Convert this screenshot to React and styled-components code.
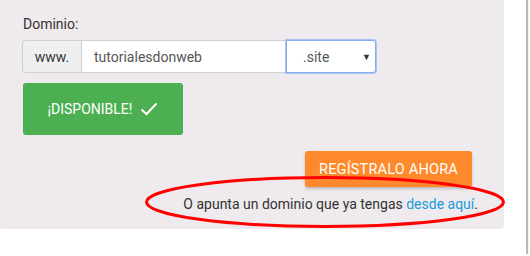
import React from 'react';
import styled, { createGlobalStyle } from 'styled-components';

const GlobalStyle = createGlobalStyle`
	body {
		margin: 0;
		background: #fff;
		font-family: Roboto, 'Liberation Sans', sans-serif;
	}
`;

const Card = styled.div`
	position: relative;
	width: 526px;
	height: 254px;
	background: #fff;
	box-shadow: 1px 1px 1px 1px rgba(0, 0, 0, 0.28);
`;

const Panel = styled.div`
	width: 504px;
	height: 229px;
	box-sizing: border-box;
	background: #eeeaee;
	border-radius: 0 0 4px 3px;
	padding: 15px 26px 0 22px;
	display: flex;
	flex-direction: column;
`;

const Label = styled.label`
	font-size: 14px;
	color: #333;
	margin-left: 1px;
	line-height: 19px;
`;

const InputGroup = styled.div`
	display: flex;
	height: 33px;
	margin-top: 6px;
	width: 354px;
`;

const Addon = styled.span`
	width: 59px;
	box-sizing: border-box;
	display: flex;
	align-items: center;
	justify-content: center;
	background: #f0eff0;
	border: 1px solid #cfcfcf;
	border-right: none;
	border-radius: 4px 0 0 4px;
	font-size: 14px;
	color: #333;
`;

const TextInput = styled.div`
	width: 205px;
	box-sizing: border-box;
	background: #fff;
	border: 1px solid #cfcfcf;
	border-right: none;
	display: flex;
	align-items: center;
	padding-left: 12px;
	font-size: 14px;
	color: #555;
`;

const Select = styled.div`
	width: 90px;
	box-sizing: border-box;
	background: #fff;
	border: 1px solid #86abef;
	box-shadow: 0 0 0 1px #a9c4f3;
	border-radius: 0 3px 3px 0;
	display: flex;
	align-items: center;
	justify-content: space-between;
	padding: 0 4px 0 16px;
	font-size: 14px;
	color: #555;

	span.arrow {
		font-size: 9px;
		color: #333;
	}
`;

const Button = styled.div`
	display: flex;
	align-items: center;
	justify-content: center;
	box-sizing: border-box;
	width: ${(p) => p.w}px;
	height: ${(p) => p.h}px;
	background: ${(p) => p.bg};
	border-radius: 3px;
	color: #fff;
	font-size: 14px;
	text-transform: uppercase;
`;

const GreenButton = styled(Button)`
	margin-top: 10px;
	margin-left: 1px;
	gap: 8px;
`;

const Bottom = styled.div`
	margin-top: auto;
	display: flex;
	flex-direction: column;
	align-items: flex-end;
	padding-bottom: 16px;
`;

const OrangeButton = styled(Button)`
	margin-right: 6px;
	box-shadow: 0 2px 3px rgba(0, 0, 0, 0.2);
	letter-spacing: 0.2px;
	font-size: 14.5px;
`;

const Note = styled.p`
	margin: 8px 0 0;
	font-size: 14px;
	color: #333;
	line-height: 18px;

	a {
		color: #1a9bd7;
		text-decoration: none;
	}
`;

const Ellipse = styled.svg`
	position: absolute;
	left: 144px;
	top: 175px;
	pointer-events: none;
`;

const App = () => {
	return (
		<Card>
			<GlobalStyle />
			<Panel>
				<Label>Dominio:</Label>
				<InputGroup>
					<Addon>www.</Addon>
					<TextInput>tutorialesdonweb</TextInput>
					<Select>
						<span>.site</span>
						<span className="arrow">▼</span>
					</Select>
				</InputGroup>
				<GreenButton w={160} h={52} bg="#4caf52">
					¡Disponible!
					<svg width="18" height="14" viewBox="0 0 18 14">
						<path d="M1.5 7.5 L6.5 12 L16.5 1.5" fill="none" stroke="#fff" strokeWidth="2" />
					</svg>
				</GreenButton>
				<Bottom>
					<OrangeButton w={167} h={36} bg="#ff8a2b">
						Regístralo ahora
					</OrangeButton>
					<Note>
						O apunta un dominio que ya tengas <a href="#">desde aquí</a>.
					</Note>
				</Bottom>
			</Panel>
			<Ellipse width="364" height="56" viewBox="0 0 364 56">
				<ellipse cx="181" cy="27" rx="178.5" ry="24.5" fill="none" stroke="#ff0000" strokeWidth="3" />
			</Ellipse>
		</Card>
	);
};

export default App;
